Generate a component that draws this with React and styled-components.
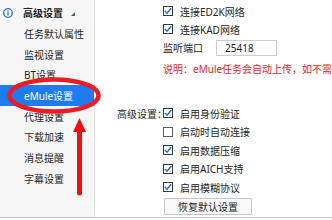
import React from "react";
import styled, { createGlobalStyle } from "styled-components";

const Global = createGlobalStyle`
  html, body { margin: 0; padding: 0; background: #ffffff; }
  body { font-family: "Noto Sans", "Noto Sans CJK SC", sans-serif; }
  * { box-sizing: border-box; }
`;

const Page = styled.div`
  position: relative;
  width: 332px;
  height: 220px;
  overflow: hidden;
  background: #fff;
`;

const Frame = styled.div`
  display: flex;
  height: 218px;
  border-bottom: 1px solid #c9c9c9;
`;

const Sidebar = styled.nav`
  width: 95px;
  flex: none;
  background: #f6f6f6;
  border-right: 1px solid #e2e2e2;
  display: flex;
  flex-direction: column;
`;

const GroupHeader = styled.div`
  height: 23px;
  display: flex;
  align-items: center;
  padding-left: 3px;
  padding-top: 2px;
  font-size: 10px;
  font-weight: 700;
  color: #1f1f1f;
`;

const HeaderLabel = styled.span`
  margin-left: 10px;
`;

const Caret = styled.span`
  width: 0;
  height: 0;
  margin-left: 8px;
  margin-top: 3px;
  border-left: 4px solid transparent;
  border-bottom: 4px solid #4a5a78;
`;

const NavItem = styled.div`
  height: 20.7px;
  display: flex;
  align-items: center;
  padding-left: 24px;
  font-size: 10px;
  color: ${(p) => (p.$active ? "#ffffff" : "#262626")};
  background: ${(p) => (p.$active ? "#1f7cf0" : "transparent")};
  white-space: nowrap;
`;

const Main = styled.main`
  flex: 1;
  min-width: 0;
  overflow: hidden;
  padding: 2px 0 0 22px;
  display: grid;
  grid-template-columns: 46px max-content;
  align-content: start;
  font-size: 10px;
  color: #262626;
  white-space: nowrap;
`;

const Label = styled.div`
  display: flex;
  align-items: center;
  height: ${(p) => p.$h || 18}px;
  margin-top: ${(p) => p.$mt || 0}px;
`;

const Row = styled.div`
  grid-column: 2;
  display: flex;
  align-items: center;
  height: ${(p) => p.$h || 18}px;
  margin-top: ${(p) => p.$mt || 0}px;
`;

const Box = styled.span`
  width: 10px;
  height: 10px;
  flex: none;
  border: 1px solid ${(p) => (p.$checked ? "#3a3a3a" : "#5a5a5a")};
  background: #fff;
  margin-right: 7px;
  display: flex;
  align-items: center;
  justify-content: center;
`;

const PortLabel = styled.span`
  width: 53px;
`;

const PortInput = styled.div`
  width: 61px;
  height: 16px;
  border: 1px solid #cfcfcf;
  background: #fff;
  padding-left: 8px;
  display: flex;
  align-items: center;
  font-size: 10px;
  color: #1c1c1c;
`;

const Note = styled(Row)`
  color: #e3262a;
`;

const ResetButton = styled.button`
  width: 88px;
  height: 17px;
  margin-left: 1px;
  padding: 0;
  border: 1px solid #c6c6c6;
  border-radius: 1px;
  background: #f9f9f9;
  font-family: inherit;
  font-size: 10px;
  color: #262626;
`;

const Overlay = styled.svg`
  position: absolute;
  left: 0;
  top: 0;
  pointer-events: none;
`;

function Check({ checked }) {
  return (
    <Box $checked={checked}>
      {checked && (
        <svg width="8" height="8" viewBox="0 0 8 8">
          <path d="M0.8 4.1 L3 6.2 L7.2 1.3" fill="none" stroke="#1a6fd6" strokeWidth="1.4" />
        </svg>
      )}
    </Box>
  );
}

function InfoIcon() {
  return (
    <svg width="10" height="10" viewBox="0 0 10 10">
      <circle cx="5" cy="5" r="4.3" fill="none" stroke="#1a72e0" strokeWidth="1.3" />
      <rect x="4.35" y="4.1" width="1.3" height="3.4" fill="#1a72e0" />
      <rect x="4.35" y="2.3" width="1.3" height="1.2" fill="#1a72e0" />
    </svg>
  );
}

const navItems = ["任务默认属性", "监视设置", "BT设置", "eMule设置", "代理设置", "下载加速", "消息提醒", "字幕设置"];

const topChecks = [
  { label: "连接ED2K网络", checked: true },
  { label: "连接KAD网络", checked: true },
];

const advChecks = [
  { label: "启用身份验证", checked: true },
  { label: "启动时自动连接", checked: false },
  { label: "启用数据压缩", checked: true },
  { label: "启用AICH支持", checked: true },
  { label: "启用模糊协议", checked: true },
];

export default function App() {
  return (
    <Page>
      <Global />
      <Frame>
        <Sidebar>
          <GroupHeader>
            <InfoIcon />
            <HeaderLabel>高级设置</HeaderLabel>
            <Caret />
          </GroupHeader>
          {navItems.map((t) => (
            <NavItem key={t} $active={t === "eMule设置"}>
              {t}
            </NavItem>
          ))}
        </Sidebar>
        <Main>
          {topChecks.map((c) => (
            <Row key={c.label}>
              <Check checked={c.checked} />
              {c.label}
            </Row>
          ))}
          <Row $h={19}>
            <PortLabel>监听端口</PortLabel>
            <PortInput>25418</PortInput>
          </Row>
          <Note $h={20} $mt={1}>说明：eMule任务会自动上传，如不需要</Note>
          <Label $mt={26} $h={18.5}>高级设置：</Label>
          {advChecks.map((c, i) => (
            <Row key={c.label} $h={18.5} $mt={i === 0 ? 26 : 0}>
              <Check checked={c.checked} />
              {c.label}
            </Row>
          ))}
          <Row $h={17} $mt={1.5}>
            <ResetButton>恢复默认设置</ResetButton>
          </Row>
        </Main>
      </Frame>
      <Overlay width="332" height="220" viewBox="0 0 332 220">
        <ellipse cx="54" cy="95.5" rx="44.5" ry="16" fill="none" stroke="#ec1c24" strokeWidth="4.5" />
        <path d="M79.5 131 L79.5 193" stroke="#f01010" strokeWidth="5" strokeLinecap="round" />
        <path d="M79.5 118 L86 132 L73 132 Z" fill="#f01010" />
      </Overlay>
    </Page>
  );
}
